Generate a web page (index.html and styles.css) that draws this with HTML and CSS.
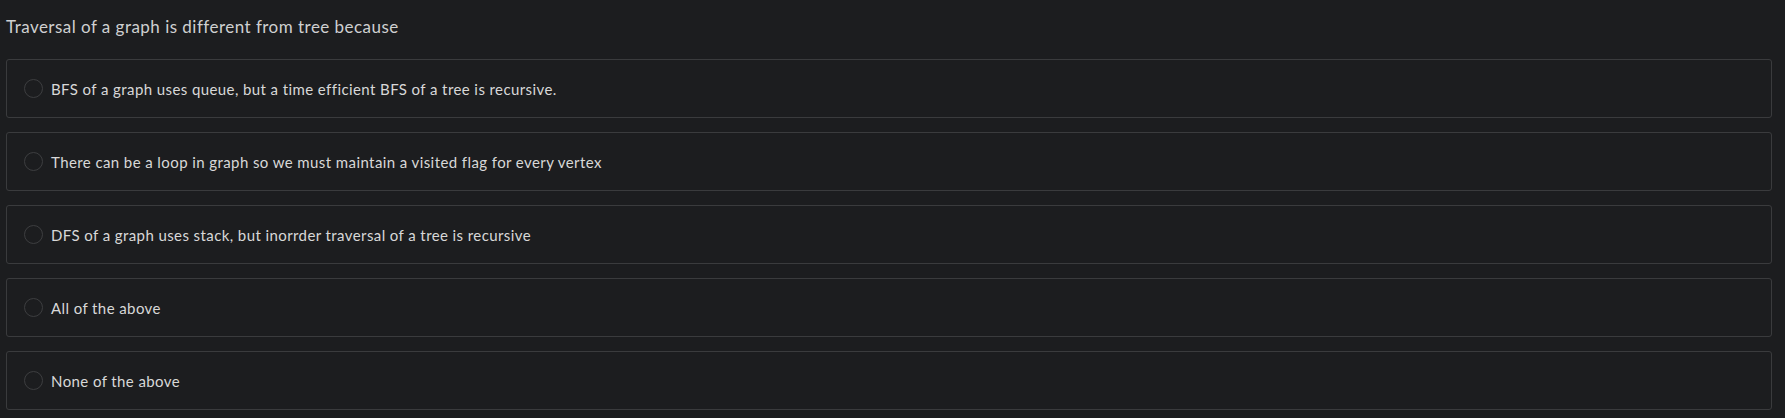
FILE: index.html
```html
<!DOCTYPE html>
<html lang="en">
<head>
<meta charset="utf-8">
<title>Quiz question</title>
<link rel="stylesheet" href="styles.css">
</head>
<body>
<main class="question">
  <h1 class="question-title">Traversal of a graph is different from tree because</h1>
  <div class="options">
    <label class="option"><span class="radio"></span><span class="option-text">BFS of a graph uses queue, but a time efficient BFS of a tree is recursive.</span></label>
    <label class="option"><span class="radio"></span><span class="option-text">There can be a loop in graph so we must maintain a visited flag for every vertex</span></label>
    <label class="option"><span class="radio"></span><span class="option-text">DFS of a graph uses stack, but inorrder traversal of a tree is recursive</span></label>
    <label class="option"><span class="radio"></span><span class="option-text">All of the above</span></label>
    <label class="option"><span class="radio"></span><span class="option-text">None of the above</span></label>
  </div>
</main>
</body>
</html>
```
FILE: styles.css
```css
html, body {
  margin: 0;
  padding: 0;
  background: #1c1d1f;
}

body {
  font-family: Lato, "Liberation Sans", Arial, sans-serif;
  color: #d8d8d8;
}

.question {
  padding: 15px 13px 0 6px;
}

.question-title {
  margin: 0 0 20px 0;
  font-size: 17px;
  font-weight: 400;
  line-height: 24px;
  letter-spacing: 0.47px;
  color: #cfd0d1;
}

.options {
  display: flex;
  flex-direction: column;
  gap: 14px;
}

.option {
  display: flex;
  align-items: center;
  gap: 8px;
  height: 59px;
  box-sizing: border-box;
  padding: 0 17px;
  border: 1px solid #3a3b3d;
  border-radius: 3px;
  font-size: 15px;
  letter-spacing: 0.41px;
  cursor: pointer;
}

.radio {
  flex: none;
  width: 19px;
  height: 19px;
  box-sizing: border-box;
  border: 1px solid #3d3e40;
  border-radius: 50%;
}

.option-text {
  line-height: 20px;
}
```
